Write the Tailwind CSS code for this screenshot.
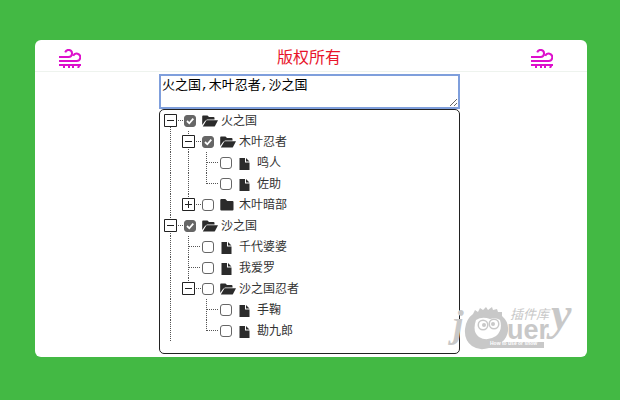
<!DOCTYPE html>
<html lang="zh">
<head>
    <meta charset="UTF-8">
    <meta name="viewport" content="width=device-width, initial-scale=1.0">
    <title>版权所有</title>
    <script src="https://cdn.jsdelivr.net/npm/@tailwindcss/browser@4"></script>
</head>
<body class="bg-[#43b944] min-h-screen pt-10 pl-[35px] pr-[33px] pb-[43px] font-['Liberation_Sans','Noto_Sans_CJK_SC',sans-serif]">
    <svg class="hidden">
        <symbol id="wind" viewBox="0 0 22 19">
            <g fill="none" stroke="#dd10cc" stroke-width="2">
                <path d="M0 8h9.500a3.500 3.500 0 1 0-3.300-4.700M0 12h17.500a3.700 3.700 0 1 0-3.300-5.200M0 16h22"/>
                <path d="M5 16v3M10 16v3M14 16v3M20.500 16l-1.500 3"/>
            </g>
        </symbol>
        <symbol id="v" viewBox="0 0 18 21"><path d="M9.500 0v21" stroke="#555" stroke-dasharray="1 1"/></symbol>
        <symbol id="t" viewBox="0 0 18 21" overflow="visible"><path d="M9.500 0v21M10 10.500h11" stroke="#555" stroke-dasharray="1 1"/></symbol>
        <symbol id="l" viewBox="0 0 18 21" overflow="visible"><path d="M9.500 0v11M10 10.500h11" stroke="#555" stroke-dasharray="1 1"/></symbol>
        <symbol id="minus" viewBox="0 0 13 13"><path d="M.5 .5h12v12h-12zM3 6.500h7" fill="#fff" stroke="#222"/></symbol>
        <symbol id="plus" viewBox="0 0 13 13"><path d="M.5 .5h12v12h-12zM3 6.500h7M6.500 3v7" fill="#fff" stroke="#222"/></symbol>
        <symbol id="open" viewBox="0 0 16 12"><path d="M1 .5h4.500L7 2h4.500q1 0 1 1v1.500H5L3 6 .2 10V1.500Q.2.500 1 .500zM4.500 5.200H16L13 11q-.3.600-1 .600H.8z" fill="#2b2b2b"/></symbol>
        <symbol id="closed" viewBox="0 0 16 12"><path d="M1.300 0h4l2 2h5.200q1 0 1 1v7.500q0 1-1 1H1.300q-1 0-1-1V1q0-1 1-1z" fill="#2b2b2b"/></symbol>
        <symbol id="file" viewBox="0 0 16 12" overflow="visible"><path d="M1.500 1H7v4.500h4.500V13h-10zM8 1l3.500 3.500H8z" fill="#2b2b2b"/></symbol>
    </svg>

    <main class="relative bg-white rounded-md pb-[3px]">
        <header class="flex items-start h-8 pl-6 pr-[34px] border-b border-[#eef3ee]">
            <svg class="w-[22px] h-[19px] mt-[9px]"><use href="#wind"/></svg>
            <h1 class="flex-1 pl-[6px] pt-[6px] text-center text-base leading-[24px] text-[#e8142a]">版权所有</h1>
            <svg class="w-[22px] h-[19px] mt-[9px]"><use href="#wind"/></svg>
        </header>

        <div class="pr-[3px] pt-[2px]">
            <div class="w-full max-w-[301px] mx-auto">
                <textarea aria-label="已选" class="block w-full h-[35px] pl-px pt-px border-2 border-[#7f9fdc] bg-white text-black text-[13px] leading-[17px] font-['Liberation_Mono','Noto_Sans_CJK_SC',monospace] outline-none resize overflow-hidden">火之国,木叶忍者,沙之国</textarea>
                <ul id="tree" class="h-[245px] pl-px border border-[#222] rounded-[5px] text-xs text-[#333]"></ul>
            </div>
        </div>

        <svg class="absolute right-[10px] bottom-[6px] w-[130px] h-[50px] overflow-visible" viewBox="0 0 130 50" fill="#c8c8c8">
            <text x="6" y="36" font-family="Liberation Serif" font-style="italic" font-weight="bold" font-size="38">j</text>
            <!-- mascot that stands for the Q -->
            <path fill-rule="evenodd" d="M26 13l2-4 3 2 2-4 3 2 3-3 2 3 4-3 1 3 4-1 1 3 4 0 0 4q7 6 6 15-1 7-6 11h42v6H42q-10 3-17-2-8-6-7-17 1-10 8-15zM29 19q-4 12 3 17 8 5 17-1 7-6 4-16-4-3-10-1-8-3-14 1z"/>
            <circle cx="36" cy="24" r="5.500"/>
            <circle cx="47" cy="23" r="5.500"/>
            <circle cx="36" cy="24" r="4" fill="#fff"/>
            <circle cx="47" cy="23" r="4" fill="#fff"/>
            <circle cx="37" cy="24" r="2"/>
            <circle cx="46" cy="23" r="2"/>
            <text x="60" y="38" font-family="Liberation Sans" font-weight="bold" font-size="27">uer</text>
            <text x="63" y="18" font-family="Noto Sans CJK SC" font-style="italic" font-size="13">插件库</text>
            <text x="43" y="44" font-family="Liberation Sans" font-weight="bold" font-size="5" fill="#fff">How to use or show</text>
            <text x="104" y="28" font-family="Liberation Serif" font-style="italic" font-weight="bold" font-size="46">y</text>
        </svg>
    </main>

    <script>
        // cells: v = line, t = branch, l = last branch, minus / plus = expander, x = empty
        const rows = [
            [["minus first"], true, "open", "火之国"],
            [["v", "minus"], true, "open", "木叶忍者"],
            [["v", "v", "t"], false, "file", "鸣人"],
            [["v", "v", "l"], false, "file", "佐助"],
            [["v", "plus last"], false, "closed", "木叶暗部"],
            [["minus"], true, "open", "沙之国"],
            [["v", "t"], false, "file", "千代婆婆"],
            [["v", "t"], false, "file", "我爱罗"],
            [["v", "minus last"], false, "open", "沙之国忍者"],
            [["v", "x", "t"], false, "file", "手鞠"],
            [["v", "x", "l"], false, "file", "勘九郎"],
        ];

        function cell(c) {
            const [kind, pos] = c.split(" ");
            if (kind !== "minus" && kind !== "plus") {
                return `<svg class="w-[18px] h-[21px] overflow-visible"><use href="#${kind}"/></svg>`;
            }
            const line = pos === "first" ? "M9.500 11v10" : pos === "last" ? "M9.500 0v10" : "M9.500 0v21";
            return `<svg class="w-[18px] h-[21px] overflow-visible">
                <path d="${line}M17 10.500h5" stroke="#555" stroke-dasharray="1 1"/>
                <use href="#${kind}" x="3" y="4" width="13" height="13"/>
            </svg>`;
        }

        document.getElementById("tree").innerHTML = rows.map(([cells, on, icon, name]) => `
            <li class="flex items-center h-[21px]">
                ${cells.map(cell).join("")}
                <label class="flex items-center">
                    <span class="relative ml-[5px] mr-[6px] w-3 h-3">
                        <input type="checkbox" ${on ? "checked" : ""} class="peer block appearance-none w-3 h-3 border border-[#666] rounded-[3px] bg-white checked:bg-[#666]">
                        <svg class="absolute inset-0 hidden peer-checked:block pointer-events-none" viewBox="0 0 12 12"><path d="M3 6l2.300 2.300L9.300 3.700" fill="none" stroke="#fff" stroke-width="1.800"/></svg>
                    </span>
                    <svg class="w-4 h-3 mr-[3px] overflow-visible"><use href="#${icon}"/></svg>
                    ${name}
                </label>
            </li>`).join("");
    </script>
</body>
</html>
